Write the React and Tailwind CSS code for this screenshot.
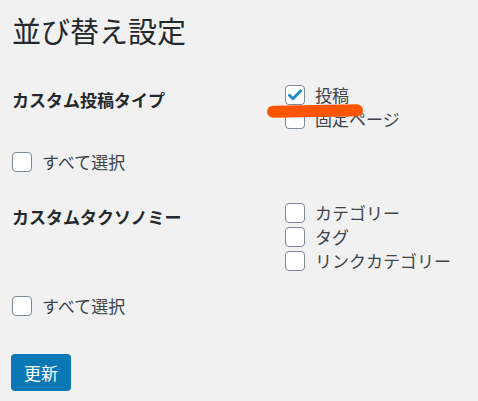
import { useState } from 'react'

const FONT = { fontFamily: '"Noto Sans CJK JP", "Noto Sans", sans-serif' }

function Check({ checked }) {
  return (
    <span className="flex h-[20px] w-[20px] shrink-0 items-center justify-center rounded-[4px] border border-[#7e8993] bg-white">
      {checked && (
        <svg viewBox="0 0 20 20" className="h-[18px] w-[18px]">
          <path d="M3.8 10.2l4 4L16.4 5.2" fill="none" stroke="#1e8cbe" strokeWidth="3.2" strokeLinecap="round" strokeLinejoin="round" />
        </svg>
      )}
    </span>
  )
}

function Option({ label, checked }) {
  return (
    <label className="flex h-[24px] items-center gap-[10px] text-[17px] text-[#3c434a]">
      <Check checked={checked} />
      <span>{label}</span>
    </label>
  )
}

function Section({ title, items, top, labelPad }) {
  return (
    <div className={`flex ${top}`}>
      <div className={`w-[273px] shrink-0 text-[17px] font-bold leading-[24px] text-[#23282d] ${labelPad}`}>
        {title}
      </div>
      <div className="flex flex-col">
        {items.map((it) => (
          <Option key={it.label} label={it.label} checked={it.checked} />
        ))}
      </div>
    </div>
  )
}

export default function App() {
  const [posts] = useState([
    { label: '投稿', checked: true },
    { label: '固定ページ', checked: false },
  ])
  const [taxes] = useState([
    { label: 'カテゴリー', checked: false },
    { label: 'タグ', checked: false },
    { label: 'リンクカテゴリー', checked: false },
  ])

  return (
    <div className="relative h-[401px] w-[478px] overflow-hidden bg-[#f1f1f1] pl-[12px] pt-[12px]" style={FONT}>
      <h1 className="text-[29px] font-normal leading-[36px] text-[#23282d]">並び替え設定</h1>

      <Section title="カスタム投稿タイプ" items={posts} top="mt-[35px]" labelPad="pt-[5px]" />

      <div className="mt-[19px]">
        <Option label="すべて選択" />
      </div>

      <Section title="カスタムタクソノミー" items={taxes} top="mt-[27px]" labelPad="pt-[4px]" />

      <div className="mt-[21px]">
        <Option label="すべて選択" />
      </div>

      <button className="mt-[36px] ml-[-1px] h-[37px] w-[60px] rounded-[4px] bg-[#0a78b5] text-[17px] text-white">
        更新
      </button>

      {/* orange marker stroke over the checkbox list */}
      <div className="absolute left-[267px] top-[105px] h-[12px] w-[96px] -rotate-1 rounded-full bg-[#ff5500]" />
    </div>
  )
}
